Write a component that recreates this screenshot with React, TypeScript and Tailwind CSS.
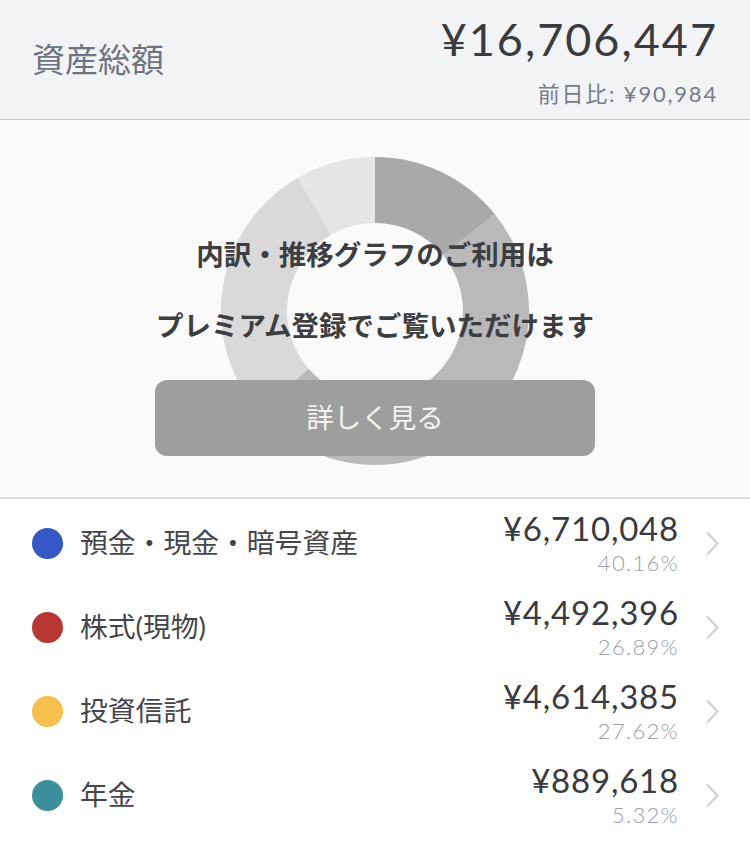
import React from "react";

const FONT = { fontFamily: "Lato, 'Noto Sans CJK JP', sans-serif" };

function pt(c: number, rad: number, deg: number): [number, number] {
  const a = (deg * Math.PI) / 180;
  return [c + rad * Math.sin(a), c - rad * Math.cos(a)];
}

function seg(c: number, R: number, r: number, a0: number, a1: number) {
  const large = a1 - a0 > 180 ? 1 : 0;
  const [x0, y0] = pt(c, R, a0);
  const [x1, y1] = pt(c, R, a1);
  const [x2, y2] = pt(c, r, a1);
  const [x3, y3] = pt(c, r, a0);
  return `M${x0} ${y0} A${R} ${R} 0 ${large} 1 ${x1} ${y1} L${x2} ${y2} A${r} ${r} 0 ${large} 0 ${x3} ${y3} Z`;
}

const SEGS: [number, number, string][] = [
  [0, 51, "#a9a9a9"],
  [51, 229, "#b9b9b9"],
  [229, 330, "#d9d9d9"],
  [330, 360, "#e5e5e5"],
];

function Donut() {
  return (
    <svg width="308" height="308" viewBox="0 0 308 308">
      {SEGS.map(([a0, a1, col], i) => (
        <path key={i} d={seg(154, 154, 88, a0, a1)} fill={col} />
      ))}
    </svg>
  );
}

function Chevron() {
  return (
    <svg width="15" height="25" viewBox="0 0 15 25" fill="none">
      <path d="M2.5 2 L12.5 12.5 L2.5 23" stroke="#d2d2d4" strokeWidth="2.4" strokeLinecap="round" strokeLinejoin="round" />
    </svg>
  );
}

const ROWS = [
  { color: "#3459c4", label: "預金・現金・暗号資産", amount: "¥6,710,048", pct: "40.16%" },
  { color: "#b93733", label: "株式(現物)", amount: "¥4,492,396", pct: "26.89%" },
  { color: "#f6c04e", label: "投資信託", amount: "¥4,614,385", pct: "27.62%" },
  { color: "#3b8e9b", label: "年金", amount: "¥889,618", pct: "5.32%" },
];

export default function App() {
  return (
    <div className="w-[750px] h-[866px] bg-white overflow-hidden" style={FONT}>
      <div className="h-[120px] bg-[#f2f3f5] border-b border-[#c9c9cc] flex items-start justify-between pl-[32px] pr-[34px]">
        <div className="text-[33px] text-[#6f7480] leading-none mt-[43px]">資産総額</div>
        <div className="flex flex-col items-end pt-[17px]">
          <div className="text-[45px] text-[#3a3b3f] leading-none tracking-[2px] mr-[-2px]">¥16,706,447</div>
          <div className="text-[22px] text-[#777c88] leading-none tracking-[1.8px] mr-[-2px] mt-[21px]">前日比: ¥90,984</div>
        </div>
      </div>
      <div className="relative h-[379px] bg-[#fafafa] border-b-2 border-[#dedede] flex justify-center pt-[37px]">
        <Donut />
        <div className="absolute inset-x-0 top-0 flex flex-col items-center">
          <div className="mt-[121px] text-[27.5px] font-bold text-[#3d3e41] leading-none">内訳・推移グラフのご利用は</div>
          <div className="mt-[43px] text-[27.5px] font-bold text-[#3d3e41] leading-none">プレミアム登録でご覧いただけます</div>
          <div className="mt-[41px] w-[440px] h-[76px] rounded-[12px] bg-[#9e9e9e] flex items-center justify-center text-[27.5px] text-[#f2f2f2] leading-none">
            詳しく見る
          </div>
        </div>
      </div>
      <div className="flex flex-col pt-[2px]">
        {ROWS.map((r, i) => (
          <div key={i} className="h-[84px] flex items-center pl-[32px] pr-[30px]">
            <div className="w-[31px] h-[31px] rounded-full shrink-0" style={{ backgroundColor: r.color }} />
            <div className="ml-[17px] flex-1 text-[27.8px] text-[#45464a] leading-none">{r.label}</div>
            <div className="flex flex-col items-end">
              <div className="text-[33px] text-[#3a3b3f] leading-none tracking-[0.8px] mr-[-1px]">{r.amount}</div>
              <div className="text-[22px] font-light text-[#9a9da5] leading-none tracking-[1.3px] mr-[-1px] mt-[7px]">{r.pct}</div>
            </div>
            <div className="ml-[27px]">
              <Chevron />
            </div>
          </div>
        ))}
      </div>
    </div>
  );
}
